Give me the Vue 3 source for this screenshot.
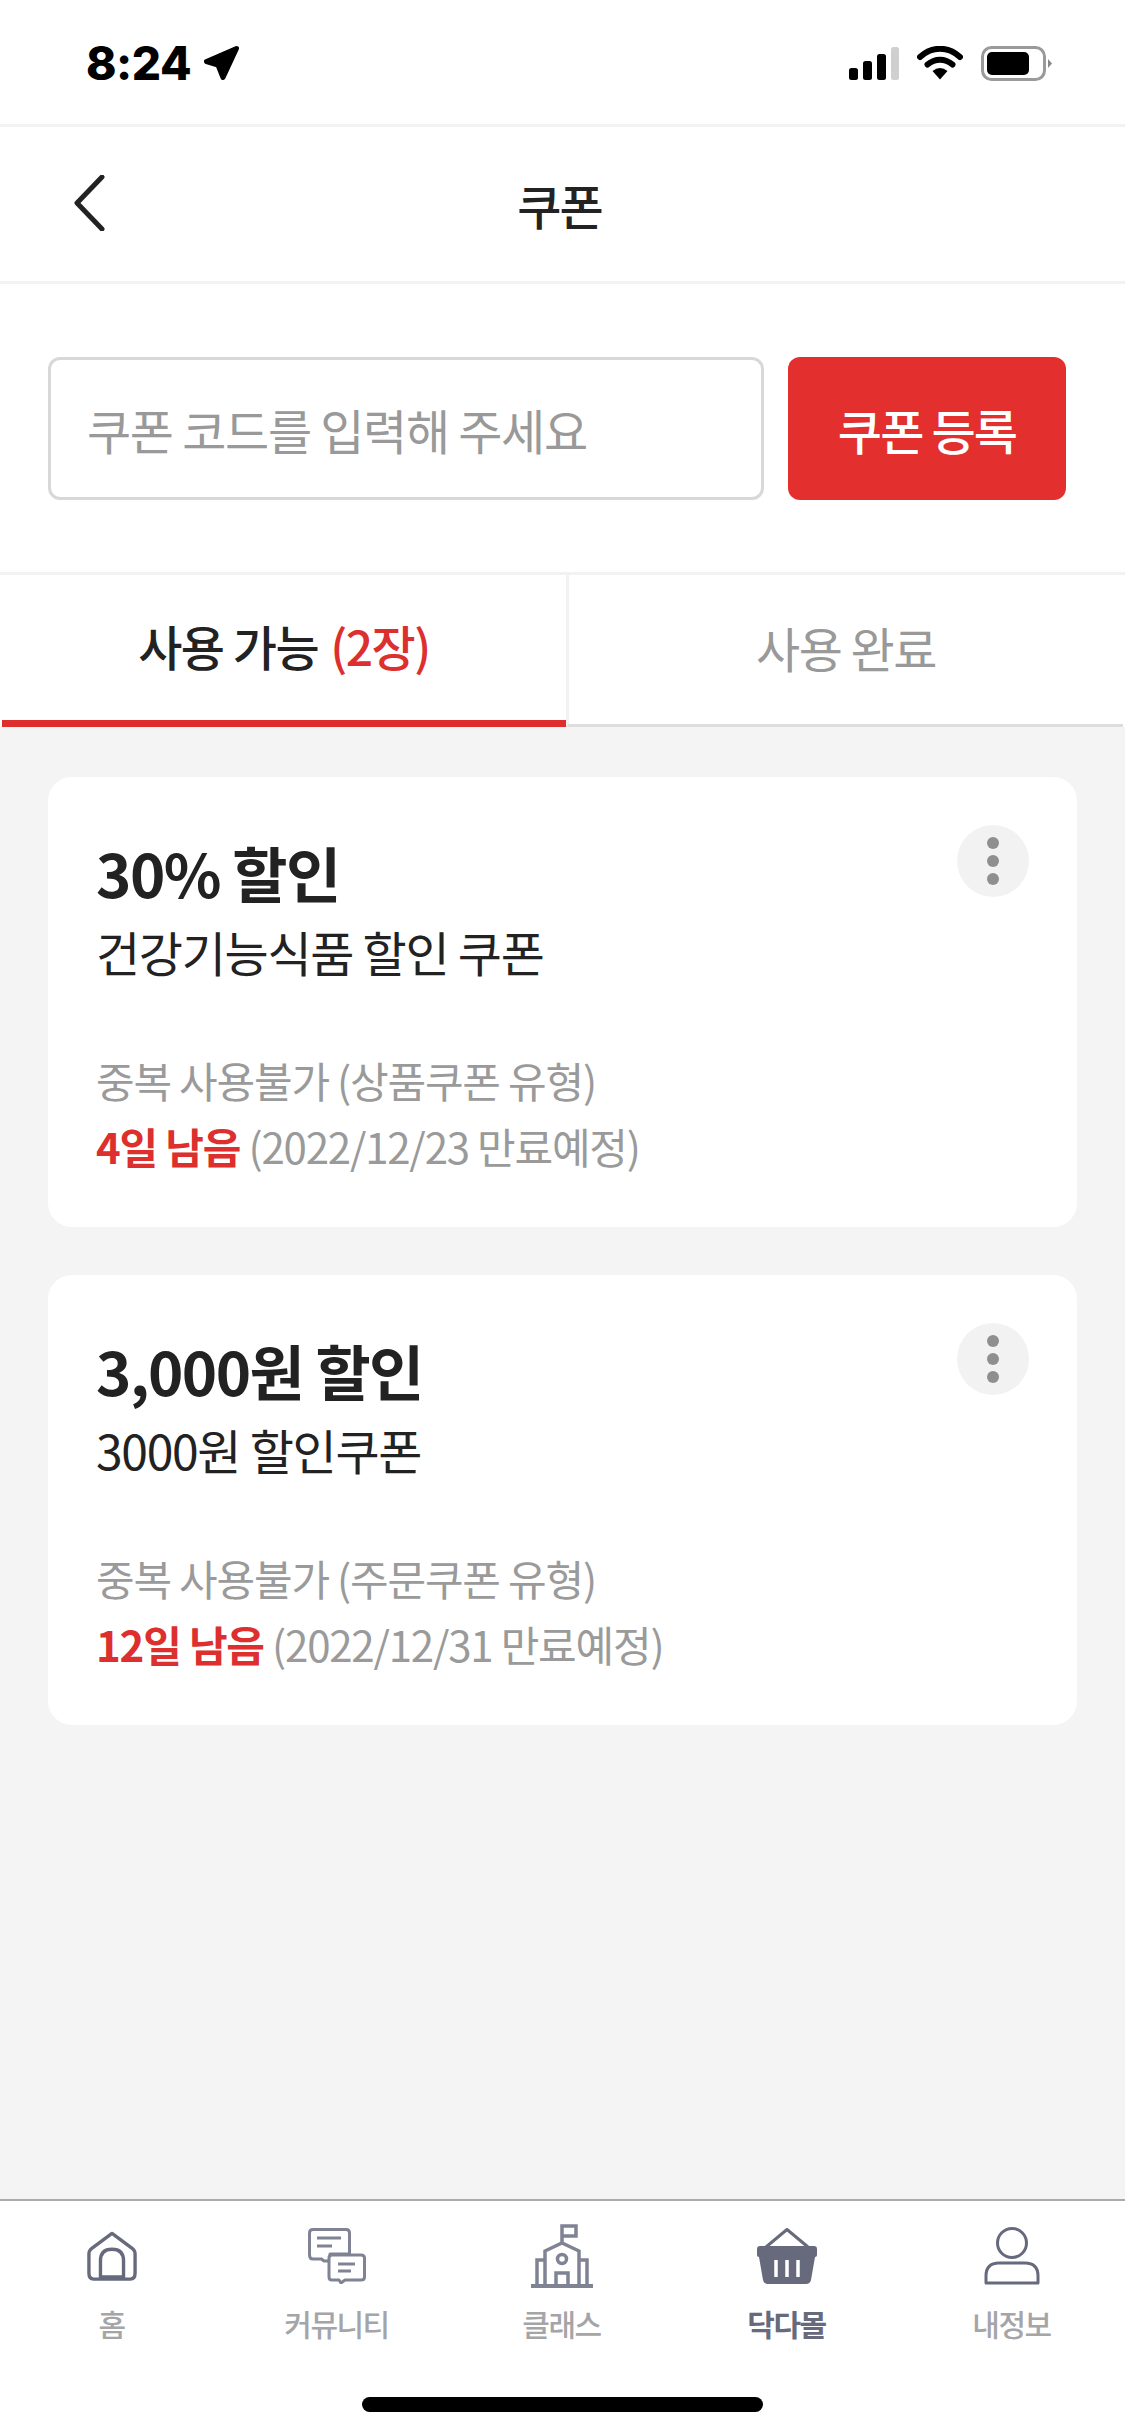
<template>
  <div class="page">
    <!-- status bar -->
    <div class="status-bar">
      <div class="status-left">
        <span class="time">8:24</span>
        <svg width="38" height="37" viewBox="0 0 38 37">
          <path d="M33.500 3.500 L3.500 16.500 L15 20 L20 32.500Z" fill="#000" stroke="#000" stroke-width="5" stroke-linejoin="round" />
        </svg>
      </div>
      <div class="status-right">
        <svg width="50" height="33" viewBox="0 0 50 33">
          <rect x="0" y="21" width="9" height="12" rx="2.500" fill="#000" />
          <rect x="14" y="14" width="9" height="19" rx="2.500" fill="#000" />
          <rect x="28" y="7" width="9" height="26" rx="2.500" fill="#000" />
          <rect x="42" y="0" width="8" height="33" rx="2.500" fill="#cfcfcf" />
        </svg>
        <svg width="46" height="34" viewBox="0 0 46 34">
          <path d="M3 11 C15 0 31 0 43 11" fill="none" stroke="#000" stroke-width="6" stroke-linecap="round" />
          <path d="M10.500 18.500 C18 12 28 12 35.500 18.500" fill="none" stroke="#000" stroke-width="6" stroke-linecap="round" />
          <path d="M15.500 25 Q23 19 30.500 25 L23 33.500Z" fill="#000" />
        </svg>
        <svg width="72" height="35" viewBox="0 0 72 35">
          <rect x="1.500" y="1.500" width="62" height="32" rx="9" fill="none" stroke="#9a9a9a" stroke-width="3" />
          <rect x="6" y="6" width="42" height="23" rx="5" fill="#000" />
          <path d="M67 13 L71 17.500 L67 22Z" fill="#888" />
        </svg>
      </div>
    </div>

    <!-- header -->
    <div class="header">
      <svg class="back-icon" width="34" height="56" viewBox="0 0 34 56">
        <path d="M31 2 L6 28 L31 54" fill="none" stroke="#222" stroke-width="5" stroke-linecap="round" stroke-linejoin="round" />
      </svg>
      <h1 class="header-title">쿠폰</h1>
    </div>

    <!-- coupon code -->
    <div class="code-row">
      <input class="code-input" type="text" placeholder="쿠폰 코드를 입력해 주세요" />
      <button class="code-btn">쿠폰 등록</button>
    </div>

    <!-- tabs -->
    <div class="tabs">
      <div class="tab active">사용 가능 <span class="count">(2장)</span></div>
      <div class="tab">사용 완료</div>
    </div>

    <!-- coupons -->
    <div class="content">
      <div class="card" v-for="c in coupons" :key="c.title">
        <div class="more">
          <i></i><i></i><i></i>
        </div>
        <div class="card-title">{{ c.title }}</div>
        <div class="card-sub">{{ c.sub }}</div>
        <div class="card-meta">{{ c.type }}</div>
        <div class="card-meta"><b>{{ c.left }}</b> {{ c.date }}</div>
      </div>
    </div>

    <!-- bottom nav -->
    <div class="tabbar">
      <div class="nav-item">
        <div class="nav-icon">
          <svg width="50" height="52" viewBox="0 0 52 52">
            <path d="M26 2.500 L47 18 Q50 20.500 50 24 L50 44 Q50 50 45 50 L7 50 Q2 50 2 44 L2 24 Q2 20.500 5 18Z M14 49 L14 31 Q14 19 26 19 Q38 19 38 31 L38 49" fill="none" stroke="#666a7c" stroke-width="3.500" stroke-linejoin="round" />
            <path d="M14 48 H38" stroke="#666a7c" stroke-width="4" />
          </svg>
        </div>
        <span>홈</span>
      </div>
      <div class="nav-item">
        <div class="nav-icon">
          <svg width="58" height="56" viewBox="0 0 58 56">
            <path d="M5 1.500 H38 Q41.500 1.500 41.500 5 V26 H22 V33 H16 L13.500 31 H5 Q1.500 31 1.500 27 V5 Q1.500 1.500 5 1.500Z" fill="none" stroke="#7f8394" stroke-width="3" stroke-linejoin="round" />
            <path d="M9 10 H33 M9 18 H24" stroke="#7f8394" stroke-width="3" />
            <path d="M24 27 H53 Q56.500 27 56.500 30 V49 Q56.500 52 53 52 H37 L33 55 L31 52 H24 Q21 52 21 49 V30 Q21 27 24 27Z" fill="#fff" stroke="#7f8394" stroke-width="3" stroke-linejoin="round" />
            <path d="M30 36 H47 M30 43 H43" stroke="#7f8394" stroke-width="3" />
          </svg>
        </div>
        <span>커뮤니티</span>
      </div>
      <div class="nav-item">
        <div class="nav-icon">
          <svg width="64" height="64" viewBox="0 0 64 64">
            <g fill="none" stroke="#7f8394" stroke-width="3.500">
              <path d="M32 20 V2 H46 V12 H32" />
              <path d="M15 62 V27 L32 19 L49 27 V62" />
              <path d="M15 36 H7 V62 M49 36 H57 V62" />
              <circle cx="32" cy="35" r="4.500" />
              <path d="M26 62 V49 H38 V62" />
            </g>
            <path d="M1 62 H63" stroke="#7f8394" stroke-width="4" />
          </svg>
        </div>
        <span>클래스</span>
      </div>
      <div class="nav-item current">
        <div class="nav-icon">
          <svg width="60" height="56" viewBox="0 0 60 56">
            <path d="M9 19 L30 1.500 L51 19" fill="none" stroke="#666a7c" stroke-width="3" stroke-linejoin="round" />
            <path d="M3 18 H57 Q60 18 60 21 V27 Q60 29 58 29 L54 52 Q53 56 49 56 H11 Q7 56 6 52 L2 29 Q0 29 0 27 V21 Q0 18 3 18Z" fill="#666a7c" />
            <path d="M19 32 V49 M30 32 V49 M41 32 V49" stroke="#fff" stroke-width="3.500" />
          </svg>
        </div>
        <span>닥다몰</span>
      </div>
      <div class="nav-item">
        <div class="nav-icon">
          <svg width="56" height="58" viewBox="0 0 56 58">
            <circle cx="28" cy="16" r="14.500" fill="none" stroke="#666a7c" stroke-width="3" />
            <path d="M2 56 V49 Q2 36 15 36 H41 Q54 36 54 49 V56Z" fill="none" stroke="#666a7c" stroke-width="3" stroke-linejoin="round" />
          </svg>
        </div>
        <span>내정보</span>
      </div>
    </div>

    <div class="home-indicator"></div>
  </div>
</template>

<script setup>
const coupons = [
  {
    title: '30% 할인',
    sub: '건강기능식품 할인 쿠폰',
    type: '중복 사용불가 (상품쿠폰 유형)',
    left: '4일 남음',
    date: '(2022/12/23 만료예정)'
  },
  {
    title: '3,000원 할인',
    sub: '3000원 할인쿠폰',
    type: '중복 사용불가 (주문쿠폰 유형)',
    left: '12일 남음',
    date: '(2022/12/31 만료예정)'
  }
]
</script>

<style>
html, body {
  margin: 0;
  background: #fff;
}
</style>

<style scoped>
.page {
  position: relative;
  display: flex;
  flex-direction: column;
  width: 1125px;
  height: 2436px;
  overflow: hidden;
  background: #f4f4f4;
  font-family: "Noto Sans CJK KR", "Noto Sans", sans-serif;
  color: #222;
}

.status-bar {
  display: flex;
  justify-content: space-between;
  align-items: center;
  height: 124px;
  padding: 2px 72px 0 86px;
  box-sizing: border-box;
  background: #fff;
}

.status-left {
  display: flex;
  align-items: center;
  gap: 12px;
}

.time {
  font-family: Inter, sans-serif;
  font-weight: 800;
  font-size: 46px;
  letter-spacing: -0.5px;
  line-height: 1;
  color: #000;
}

.status-right {
  display: flex;
  align-items: center;
  gap: 18px;
}

.header {
  position: relative;
  display: flex;
  align-items: center;
  justify-content: center;
  height: 160px;
  padding: 0 6px 0 0;
  box-sizing: border-box;
  background: #fff;
  border-top: 3px solid #f2f2f2;
  border-bottom: 3px solid #f2f2f2;
}

.back-icon {
  position: absolute;
  left: 71px;
  top: 48px;
}

.header-title {
  margin: 0;
  font-size: 48px;
  font-weight: 500;
  letter-spacing: -2px;
  color: #222;
}

.code-row {
  display: flex;
  gap: 24px;
  padding: 73px 59px 72px 48px;
  background: #fff;
}

.code-input {
  flex: 1;
  min-width: 0;
  height: 143px;
  padding: 0 36px;
  box-sizing: border-box;
  border: 3px solid #d8d8d8;
  border-radius: 12px;
  background: #fff;
  outline: none;
  font-family: inherit;
  font-size: 48px;
  letter-spacing: -1.3px;
}

.code-input::placeholder {
  color: #999;
  opacity: 1;
}

.code-btn {
  width: 278px;
  height: 143px;
  border: none;
  border-radius: 12px;
  background: #e32f2e;
  color: #fff;
  font-family: inherit;
  font-size: 48px;
  font-weight: 500;
  letter-spacing: -1.8px;
}

.tabs {
  display: flex;
  height: 155px;
  padding: 0 2px;
  background: #fff;
  border-top: 3px solid #f2f2f2;
  box-sizing: border-box;
}

.tab {
  flex: 1;
  display: flex;
  align-items: center;
  justify-content: center;
  gap: 12px;
  padding-bottom: 6px;
  box-sizing: border-box;
  border-bottom: 3px solid #ddd;
  border-left: 3px solid #f2f2f2;
  font-size: 48px;
  letter-spacing: -1.5px;
  color: #999;
}

.tab.active {
  flex: none;
  width: 564px;
  border-left: none;
  border-bottom: 7px solid #dc2f2e;
  font-weight: 500;
  color: #222;
}

.count {
  color: #dc2f2e;
}

.content {
  flex: 1;
  display: flex;
  flex-direction: column;
  gap: 48px;
  padding: 50px 48px 0;
}

.card {
  position: relative;
  height: 450px;
  padding: 49px 48px 0;
  box-sizing: border-box;
  background: #fff;
  border-radius: 24px;
}

.more {
  position: absolute;
  top: 48px;
  right: 48px;
  display: flex;
  flex-direction: column;
  align-items: center;
  justify-content: center;
  gap: 6px;
  width: 72px;
  height: 72px;
  border-radius: 50%;
  background: #f2f2f2;
}

.more i {
  width: 12px;
  height: 12px;
  border-radius: 50%;
  background: #8f8f8f;
}

.card-title {
  font-size: 60px;
  line-height: 91px;
  font-weight: 700;
  letter-spacing: -1.5px;
  color: #222;
}

.card-sub {
  margin-bottom: 62px;
  font-size: 48px;
  line-height: 68px;
  letter-spacing: -1.3px;
  color: #222;
}

.card-meta {
  font-size: 42px;
  line-height: 66px;
  letter-spacing: -1.2px;
  color: #9a9a9a;
}

.card-meta b {
  font-weight: 700;
  color: #dc2f2e;
}

.tabbar {
  display: grid;
  grid-template-columns: repeat(5, 225px);
  height: 237px;
  box-sizing: border-box;
  padding-top: 23px;
  background: #fff;
  border-top: 2px solid #aaa;
}

.nav-item {
  display: flex;
  flex-direction: column;
  align-items: center;
  padding-right: 2px;
  font-size: 30px;
  font-weight: 500;
  letter-spacing: -1.5px;
  color: #a5a5a8;
}

.nav-icon {
  display: flex;
  align-items: center;
  justify-content: center;
  height: 64px;
  margin-bottom: 13px;
}

.nav-item.current {
  color: #666a7c;
  font-weight: 700;
}

.home-indicator {
  position: absolute;
  left: 362px;
  bottom: 24px;
  width: 401px;
  height: 15px;
  border-radius: 8px;
  background: #000;
}
</style>
